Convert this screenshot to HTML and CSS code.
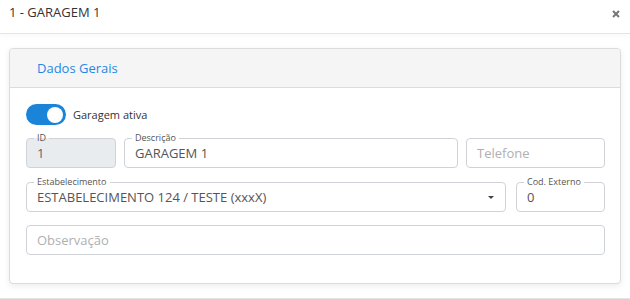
FILE: index.html
```html
<html>
    <head>
        <title>Garagem</title>
        <link rel="stylesheet" href="styles.css">
    </head>
    <body class="body">
        <div class="modal-header">
            <span class="modal-title">1 - GARAGEM 1</span>
            <svg class="close" width="8" height="8" viewBox="0 0 8 8"><path d="M1 1L7 7M7 1L1 7" stroke="#777" stroke-width="2"/></svg>
        </div>
        <div class="modal-body">
            <div class="card">
                <div class="card-header">
                    <span class="tab">Dados Gerais</span>
                </div>
                <div class="card-body">
                    <div class="switch-row">
                        <span class="switch"><span class="knob"></span></span>
                        <span class="switch-label">Garagem ativa</span>
                    </div>
                    <div class="row row-1">
                        <div class="field">
                            <label class="float disabled-label">ID</label>
                            <input class="input" type="text" value="1" disabled>
                        </div>
                        <div class="field">
                            <label class="float">Descrição</label>
                            <input class="input" type="text" value="GARAGEM 1">
                        </div>
                        <div class="field">
                            <input class="input" type="text" placeholder="Telefone">
                        </div>
                    </div>
                    <div class="row row-2">
                        <div class="field">
                            <label class="float">Estabelecimento</label>
                            <div class="input select">ESTABELECIMENTO 124 / TESTE (xxxX)<span class="caret"></span></div>
                        </div>
                        <div class="field">
                            <label class="float">Cod. Externo</label>
                            <input class="input" type="text" value="0">
                        </div>
                    </div>
                    <div class="row row-3">
                        <div class="field">
                            <input class="input" type="text" placeholder="Observação">
                        </div>
                    </div>
                </div>
            </div>
        </div>
        <div class="modal-footer"></div>
    </body>
</html>
```
FILE: styles.css
```css
.body{
    margin: 0;
    background-color: white;
    font-family: "Open Sans", "DejaVu Sans", sans-serif;
    color: #333;
}
.modal-header{
    height: 34px;
    box-sizing: border-box;
    padding: 2px 10px 0 9px;
    border-bottom: 1px solid #e5e5e5;
    display: flex;
    justify-content: space-between;
    align-items: flex-start;
    box-shadow: 0 2px 6px rgba(0,0,0,0.03);
}
.modal-title{
    font-size: 13px;
    line-height: 20px;
}
.close{
    margin-top: 8px;
}
.modal-body{
    padding: 14px 9px 14px 9px;
}
.card{
    border: 1px solid #dcdcdc;
    border-radius: 4px;
    box-shadow: 0 2px 6px rgba(0,0,0,0.08);
    background-color: white;
}
.card-header{
    height: 38px;
    background-color: #f5f5f5;
    border-bottom: 1px solid #dcdcdc;
    border-radius: 4px 4px 0 0;
    display: flex;
    align-items: center;
    padding-left: 27px;
}
.tab{
    color: #1e88e5;
    font-size: 13px;
}
.card-body{
    padding: 16px 15px 28px 16px;
}
.switch-row{
    display: flex;
    align-items: center;
    gap: 7px;
    height: 21px;
}
.switch{
    width: 40px;
    height: 21px;
    border-radius: 11px;
    background-color: #1a84d8;
    display: flex;
    align-items: center;
    justify-content: flex-end;
    padding-right: 3px;
    box-sizing: border-box;
}
.knob{
    width: 16px;
    height: 16px;
    border-radius: 50%;
    background-color: white;
}
.switch-label{
    font-size: 11px;
    color: #333;
}
.row{
    display: grid;
}
.row-1{
    margin-top: 13px;
    grid-template-columns: 90px 1fr 139px;
    gap: 8px;
}
.row-2{
    margin-top: 14px;
    grid-template-columns: 1fr 89px;
    gap: 10px;
}
.row-3{
    margin-top: 13px;
    grid-template-columns: 1fr;
}
.field{
    position: relative;
}
.input{
    display: block;
    width: 100%;
    height: 30px;
    box-sizing: border-box;
    border: 1px solid #cfd3d8;
    border-radius: 4px;
    padding: 0 10px;
    font-family: "Open Sans", "DejaVu Sans", sans-serif;
    font-size: 13px;
    color: #555;
    background-color: white;
    outline: none;
}
.input:disabled{
    background-color: #e9ecef;
    color: #666;
}
.input::placeholder{
    color: #b0b0b0;
}
.select{
    display: flex;
    align-items: center;
    justify-content: space-between;
    padding-right: 11px;
}
.caret{
    width: 0;
    height: 0;
    border-left: 3px solid transparent;
    border-right: 3px solid transparent;
    border-top: 3px solid #444;
}
.float{
    position: absolute;
    left: 8px;
    top: -7px;
    padding: 0 3px;
    font-size: 9px;
    line-height: 13px;
    color: #555;
    background-color: white;
}
.disabled-label{
    background: linear-gradient(white 55%, #e9ecef 55%);
}
.modal-footer{
    border-top: 1px solid #e5e5e5;
}
```
